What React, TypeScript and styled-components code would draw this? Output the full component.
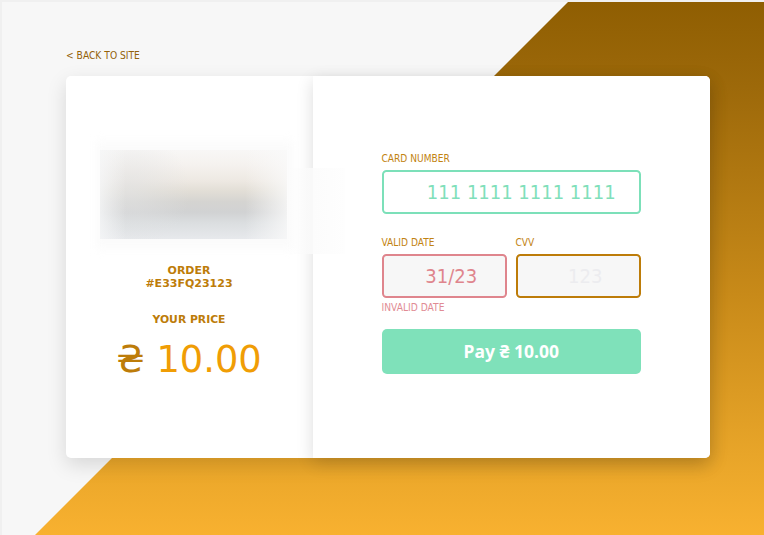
import React from 'react';
import styled, { createGlobalStyle } from 'styled-components';

const GlobalStyle = createGlobalStyle`
  * { box-sizing: border-box; }
  body { margin: 0; overflow: hidden; font-family: "DejaVu Sans", sans-serif; }
`;

const Page = styled.main`
  width: 764px;
  height: 535px;
  padding: 48px 0 0 64px;
  border-top: 2px solid #f0f0f0;
  border-left: 2px solid #f0f0f0;
  background: #f7f7f7;
  position: relative;
  isolation: isolate;
`;

const Backdrop = styled.div`
  position: absolute;
  inset: 0;
  z-index: -1;
  background: linear-gradient(180deg, #8f5e02 0%, #9d690a 16%, #c88a19 55%, #e8a529 85%, #f8b130 100%);
  clip-path: polygon(566px 0, 100% 0, 100% 100%, 33px 100%);
`;

const BackLink = styled.a`
  display: block;
  width: max-content;
  height: 12px;
  margin-bottom: 14.4px;
  font: 10.2px/12px "DejaVu Sans Condensed", "DejaVu Sans", sans-serif;
  font-stretch: semi-condensed;
  color: #94620a;
`;

const Card = styled.section`
  display: flex;
  width: 644px;
  height: 381.6px;
  border-radius: 5px;
  background: #fff;
  box-shadow: 0 7px 20px rgba(0, 0, 0, 0.13);
`;

const Summary = styled.div`
  width: 247px;
  padding-top: 63px;
  display: flex;
  flex-direction: column;
  align-items: center;
  border-radius: 5px 0 0 5px;
  color: #bd7c09;
  text-align: center;
`;

const Payment = styled.div`
  width: 397px;
  padding: 76.5px 69px 0 68.5px;
  border-radius: 0 5px 5px 0;
  background: #fff;
  box-shadow: 0 5px 17px rgba(0, 0, 0, 0.14);
`;

const LogoArea = styled.div`
  position: relative;
  width: 190px;
  height: 114px;
  margin-left: 4px;
  padding: 11px 0 0 3px;
`;

const LogoGlow = styled.div`
  position: absolute;
  left: -1px;
  top: 2px;
  width: 197px;
  height: 108px;
  background: #fbfbfb;
  filter: blur(4px);
`;

const Logo = styled.div`
  position: relative;
  width: 187px;
  height: 89px;
  overflow: hidden;
  background:
    linear-gradient(90deg, rgba(246, 247, 248, 0.8) 0, rgba(247, 248, 249, 0) 26px, rgba(247, 248, 249, 0) 145px, rgba(250, 250, 250, 0.8) 187px),
    radial-gradient(ellipse 60px 60px at 30px 40px, rgba(226, 227, 228, 0.65), rgba(226, 227, 228, 0)),
    linear-gradient(180deg, #f8f7f6 0%, #f5f2ef 16%, #eee9e3 34%, #e2ded6 46%, #d5d4d1 58%, #d1d2d3 70%, #dbdee0 82%, #e7e9ec 100%);
`;

const LogoTrail = styled.div`
  position: absolute;
  left: 283px;
  top: 166px;
  width: 60px;
  height: 86px;
  background: linear-gradient(90deg, rgba(252, 252, 252, 0), rgba(251, 251, 251, 0.8) 42%, #fdfdfd 75%, #fefefe);
`;

const Order = styled.h2`
  width: 110px;
  height: 26px;
  margin: 10.5px 0 0 -1px;
  font-size: 11px;
  line-height: 13px;
  font-weight: 700;
`;

const PriceTitle = styled(Order)`
  height: 13px;
  margin-top: 23px;
  font-size: 10.8px;
`;

const Price = styled.div`
  margin: 11px 0 0 -1px;
  font-size: 36.8px;
  line-height: 46px;
  white-space: nowrap;
  color: #f09d05;
`;

const Currency = styled.span`
  color: #bd7c09;
`;

const Label = styled.label`
  display: block;
  height: 12px;
  margin-bottom: 5.5px;
  font: 10.1px/12px "DejaVu Sans Condensed", "DejaVu Sans", sans-serif;
  font-stretch: semi-condensed;
  color: #c28311;
`;

const FieldRow = styled.div`
  display: grid;
  grid-template-columns: 125.5px 125.5px;
  column-gap: 8.5px;
  margin-top: 23px;
`;

type Tone = 'valid' | 'invalid' | 'idle';
const tones: Record<Tone, { line: string; text: string; fill: string }> = {
  valid: { line: '#7ce0b9', text: '#80dfba', fill: '#fff' },
  invalid: { line: '#df858d', text: '#df858d', fill: '#f7f7f7' },
  idle: { line: '#bd7c09', text: '#ececef', fill: '#f7f7f7' },
};

const Input = styled.input<{ $tone: Tone; $shift: number }>`
  display: block;
  width: 100%;
  height: 43.5px;
  margin: 0;
  padding: 0 0 0 ${p => p.$shift}px;
  border: 2px solid ${p => tones[p.$tone].line};
  border-radius: 4.5px;
  outline: none;
  background: ${p => tones[p.$tone].fill};
  color: ${p => tones[p.$tone].text};
  font: 20px "DejaVu Sans Condensed", "DejaVu Sans", sans-serif;
  font-stretch: semi-condensed;
  text-align: center;
  &::placeholder { color: #ececef; opacity: 1; }
`;

const ErrorText = styled.div`
  height: 12px;
  margin-top: 4.5px;
  font: 10.2px/12px "DejaVu Sans Condensed", "DejaVu Sans", sans-serif;
  font-stretch: semi-condensed;
  color: #e18b94;
`;

const PayButton = styled.button`
  display: block;
  width: 259.5px;
  height: 45.5px;
  margin: 14.5px 0 0;
  padding: 0;
  border: 0;
  border-radius: 5px;
  background: #7fe1ba;
  color: #fff;
  font: 700 17.5px/45px "Noto Sans", sans-serif;
`;

export default function App() {
  return (
    <>
      <GlobalStyle />
      <Page>
        <Backdrop />
        <BackLink>&lt; BACK TO SITE</BackLink>
        <Card>
          <Summary>
            <LogoArea>
              <LogoGlow />
              <Logo />
            </LogoArea>
            <Order>ORDER #E33FQ23123</Order>
            <PriceTitle>YOUR PRICE</PriceTitle>
            <Price><Currency>₴</Currency> 10.00</Price>
          </Summary>
          <Payment>
            <Label htmlFor="number">CARD NUMBER</Label>
            <Input id="number" $tone="valid" $shift={20} defaultValue="111 1111 1111 1111" />
            <FieldRow>
              <div>
                <Label htmlFor="date">VALID DATE</Label>
                <Input id="date" $tone="invalid" $shift={14} defaultValue="31/23" />
                <ErrorText>INVALID DATE</ErrorText>
              </div>
              <div>
                <Label htmlFor="cvv">CVV</Label>
                <Input id="cvv" $tone="idle" $shift={14} placeholder="123" />
              </div>
            </FieldRow>
            <PayButton>Pay ₴ 10.00</PayButton>
          </Payment>
        </Card>
        <LogoTrail />
      </Page>
    </>
  );
}
